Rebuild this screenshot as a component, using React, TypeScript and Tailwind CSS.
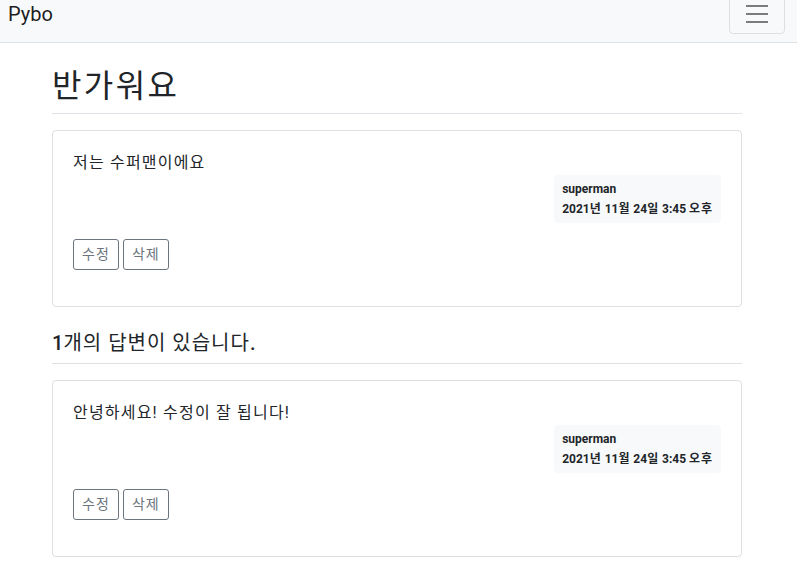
import React from "react";

const FONT = 'Roboto, "Noto Sans CJK KR", sans-serif';

function Toggler() {
  return (
    <button className="h-[40px] w-[56px] rounded-[4px] border border-[rgba(0,0,0,0.1)] px-3 py-1 flex items-center justify-center">
      <svg width="30" height="30" viewBox="0 0 30 30">
        <path d="M4 7h22M4 15h22M4 23h22" stroke="rgba(0,0,0,0.5)" strokeWidth="2" strokeLinecap="butt" />
      </svg>
    </button>
  );
}

function K({ children }: { children: React.ReactNode }) {
  return <span className="tracking-[0.075em]">{children}</span>;
}

function Post({ text }: { text: string }) {
  return (
    <div className="rounded-[4px] border border-[rgba(0,0,0,0.125)] p-5">
      <div className="text-[16px] leading-[24px] tracking-[0.075em] text-[#212529]">{text}</div>
      <div className="flex justify-end">
        <div className="rounded-[4px] bg-[#f8f9fa] p-2 text-[12px] font-bold leading-[12px] text-[#212529]">
          <div className="mb-2">superman</div>
          <div>
            2021<K>년</K> 11<K>월</K> 24<K>일</K> 3:45 <K>오후</K>
          </div>
        </div>
      </div>
      <div className="my-4 flex gap-[4px]">
        <span className="rounded-[3px] border border-[#6c757d] px-2 py-1 text-[14px] leading-[21px] tracking-[0.075em] text-[#6c757d]">수정</span>
        <span className="rounded-[3px] border border-[#6c757d] px-2 py-1 text-[14px] leading-[21px] tracking-[0.075em] text-[#6c757d]">삭제</span>
      </div>
    </div>
  );
}

export default function App() {
  return (
    <div className="h-[564px] overflow-hidden bg-white text-[#212529]" style={{ fontFamily: FONT }}>
      <div className="-mt-[14px]">
        <nav className="flex items-center justify-between border-b border-[#dee2e6] bg-[#f8f9fa] py-2 pl-2 pr-3">
          <span className="py-[5px] text-[20px] leading-[30px] text-[rgba(0,0,0,0.9)]">Pybo</span>
          <Toggler />
        </nav>
        <div className="ml-[37px] mt-4 w-[720px] px-[15px]">
          <h2 className="border-b border-[#dee2e6] py-2 text-[32px] font-normal leading-[38.4px] tracking-[0.075em]">반가워요</h2>
          <div className="mt-4">
            <Post text="저는 수퍼맨이에요" />
          </div>
          <h5 className="mt-4 border-b border-[#dee2e6] py-2 text-[20px] font-normal leading-[24px]">
            <span className="font-medium">1</span>
            <span className="tracking-[0.05em]">개의 답변이 있습니다</span>
            <span className="font-medium">.</span>
          </h5>
          <div className="mt-4">
            <Post text="안녕하세요! 수정이 잘 됩니다!" />
          </div>
        </div>
      </div>
    </div>
  );
}
